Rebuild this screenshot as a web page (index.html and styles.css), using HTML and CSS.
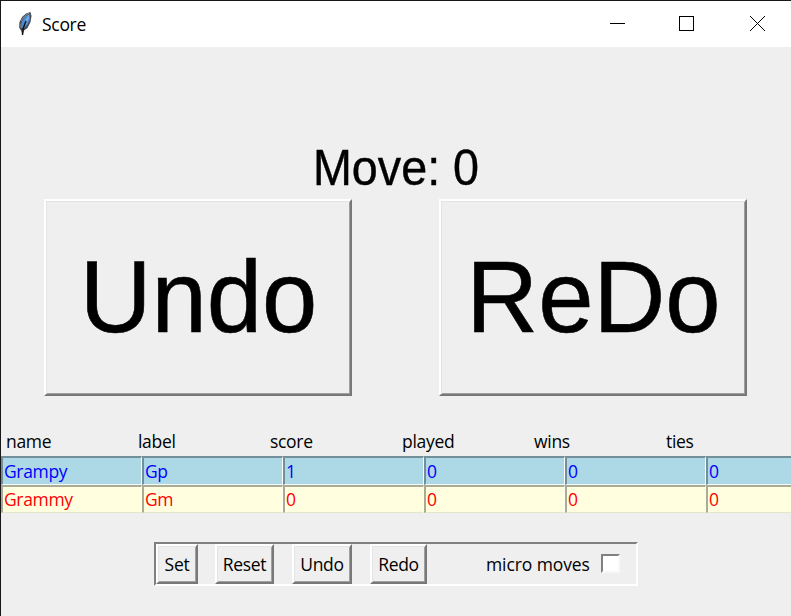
FILE: index.html
```html
<!DOCTYPE html>
<html lang="en">
<head>
<meta charset="utf-8">
<title>Score</title>
<link rel="stylesheet" href="styles.css">
</head>
<body>
<div class="window">
  <header class="titlebar">
    <svg class="feather" width="16" height="26" viewBox="0 0 16 26">
      <path d="M13.5 1 L9 2.5 L5 6 L2.5 11 L2 16.5 L4 19.5 L5.5 24 L7 19.5 L10.5 17 L13.5 11 L14.5 5 Z" fill="#45494f"/>
      <path d="M12.5 3 L8 5.5 L4.5 11 L4 17 L7.5 17 L11 13 L13 8 Z" fill="#4e89d0"/>
      <path d="M12 3 L8 10 L6 17 L10 12 L12 7 Z" fill="#74a9e4"/>
      <path d="M9 10 L6 18 L5.5 24" fill="none" stroke="#101419" stroke-width="1.5"/>
      <path d="M12.8 1.7 L8 4.5 L4 10 M3 13 V17" fill="none" stroke="#85888b" stroke-width="1"/>
    </svg>
    <span class="title">Score</span>
    <svg class="controls" width="160" height="17" viewBox="0 0 160 17" fill="none" stroke="#000">
      <path d="M0 7.5H15M69.5 .5H83.5V14.5H69.5Z" shape-rendering="crispEdges"/>
      <path d="M140 0L155 15M155 0L140 15"/>
    </svg>
  </header>
  <main>
    <div class="move">Move: 0</div>
    <div class="big-buttons">
      <button class="btn big"><span>Undo</span></button>
      <button class="btn big"><span>ReDo</span></button>
    </div>
    <div class="heads">
      <span>name</span><span>label</span><span>score</span><span>played</span><span>wins</span><span>ties</span>
    </div>
    <div class="row blue">
      <span>Grampy</span><span>Gp</span><span>1</span><span>0</span><span>0</span><span>0</span>
    </div>
    <div class="row yellow">
      <span>Grammy</span><span>Gm</span><span>0</span><span>0</span><span>0</span><span>0</span>
    </div>
    <div class="toolbar">
      <button class="btn set">Set</button>
      <button class="btn reset">Reset</button>
      <button class="btn sundo">Undo</button>
      <button class="btn sredo">Redo</button>
      <span class="micro">micro moves</span>
      <span class="check"></span>
    </div>
  </main>
</div>
</body>
</html>
```
FILE: styles.css
```css
* { box-sizing: border-box; }
body { margin: 0; background: #efefef; overflow: hidden; font: 17.5px/24px "Open Sans", sans-serif; color: #000; }
.window { width: 791px; height: 616px; border-top: 1px solid #17171a; border-left: 1px solid #17171a; overflow: hidden; }
.titlebar { height: 46px; background: #fff; display: flex; align-items: flex-start; }
.feather { margin: 10px 0 0 16px; }
.title { margin: 11px 0 0 9px; letter-spacing: -.3px; width: 80px; }
.controls { margin: 15px 21px 0 auto; }
.move { margin-top: 91px; height: 61px; font: 50.5px/60px "Liberation Sans", sans-serif; text-align: center; transform: scaleX(.925); -webkit-text-stroke: .4px #000; }
.btn { margin: 0; padding: 0; background: #efefef; color: #000; font: inherit; border: 2px solid; border-color: #fff #787878 #787878 #fff; box-shadow: inset 1px 1px #e3e3e3, inset -1px -1px #a0a0a0; white-space: nowrap; }
.big-buttons { display: flex; gap: 87px; padding-left: 43px; }
.big { width: 308px; height: 197px; font: 102px/116px "Liberation Sans", sans-serif; }
.big span { display: block; margin-top: -1px; transform: translateX(.5px) scaleX(.975); -webkit-text-stroke: .6px #000; }
.heads { display: grid; grid-template-columns: repeat(6, 132px); padding: 33px 0 0 5px; height: 60px; letter-spacing: -.3px; }
.row { display: grid; grid-template-columns: repeat(6, 141px); width: 846px; }
.row span { height: 29px; padding-left: 1px; line-height: 26px; border: 2px solid; border-right-width: 1px; border-bottom-width: 1px; letter-spacing: -.35px; }
.blue span { background: #add8e6; color: #00f; border-color: #73909a #fff #f3fafc #73909a; }
.yellow span { height: 28px; line-height: 25px; background: #ffffe0; color: #f00; border-color: #aaaa95 #fffff7 #e5e5ca #aaaa95; }
.toolbar { display: flex; width: 484px; height: 44px; margin: 29px 0 0 153px; border: 2px solid; border-color: #808080 #fff #fff #808080; letter-spacing: -.3px; }
.toolbar .btn { height: 40px; letter-spacing: -.3px; }
.set { width: 42px; }
.reset { width: 59px; margin-left: 17px; }
.sundo { width: 60px; margin-left: 18px; }
.sredo { width: 57px; margin-left: 18px; }
.micro { margin: 8px 0 0 59px; width: 115px; white-space: nowrap; letter-spacing: -.1px; }
.check { width: 19px; height: 19px; margin-top: 10px; background: #fff; border: 2px solid; border-color: #808080 #f8f8f8 #f8f8f8 #808080; }
```
